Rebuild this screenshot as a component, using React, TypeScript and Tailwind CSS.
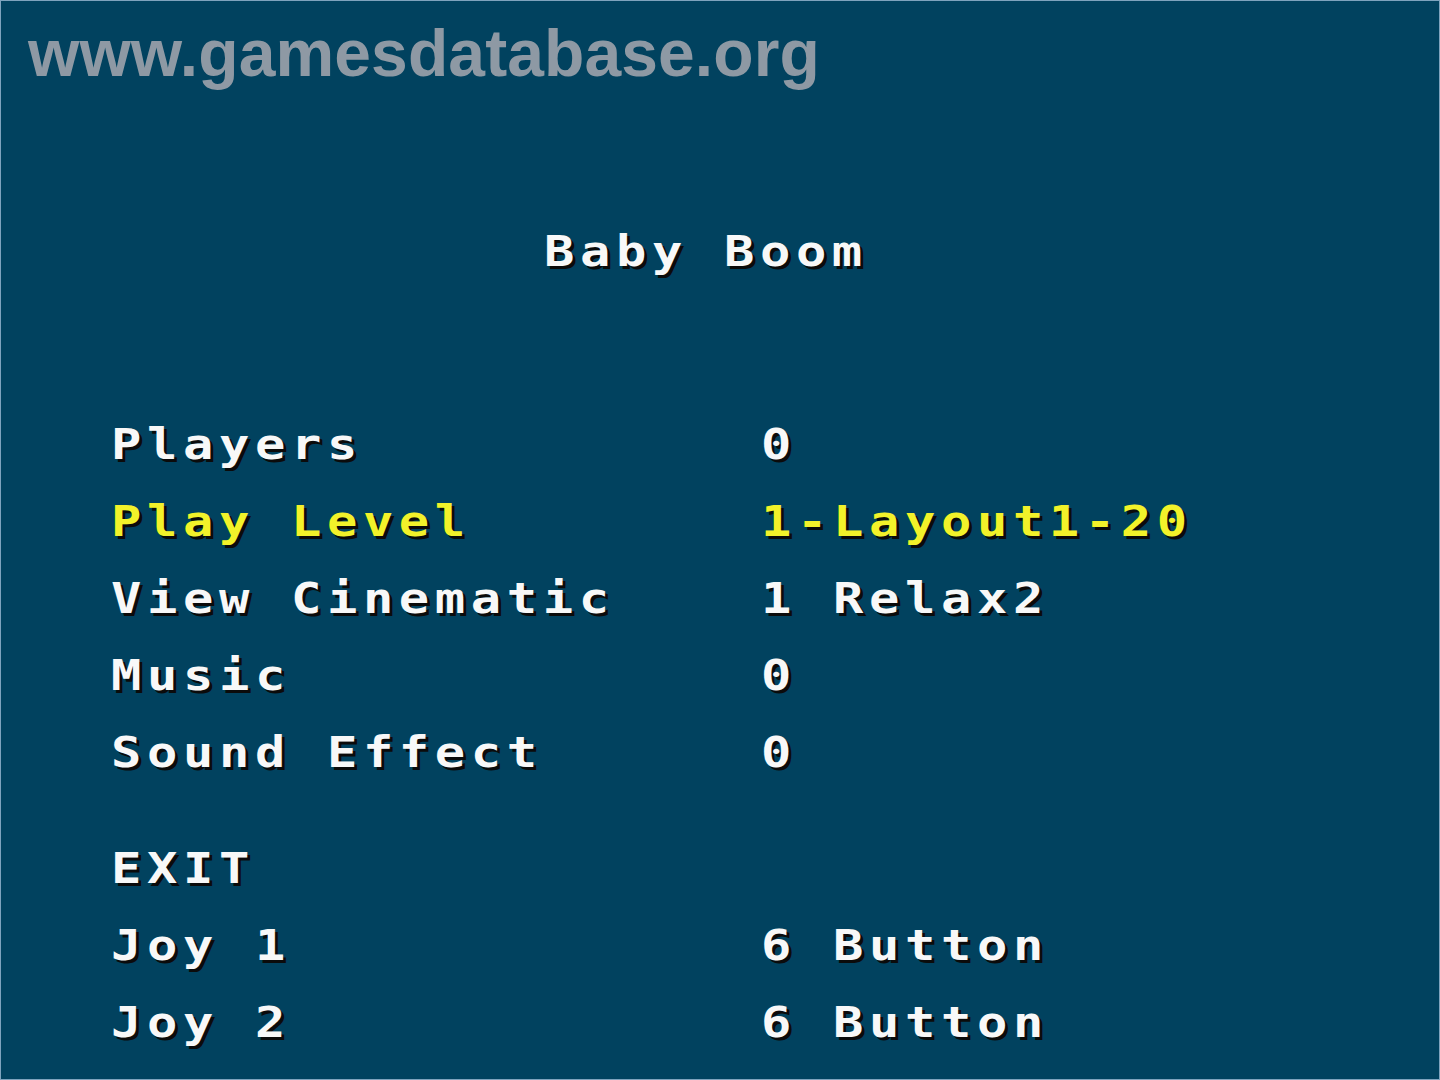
const rows = [
  { label: 'Players', value: '0' },
  { label: 'Play Level', value: '1-Layout1-20', active: true },
  { label: 'View Cinematic', value: '1 Relax2' },
  { label: 'Music', value: '0' },
  { label: 'Sound Effect', value: '0' },
]

const controls = [
  { label: 'EXIT', value: '' },
  { label: 'Joy 1', value: '6 Button' },
  { label: 'Joy 2', value: '6 Button' },
]

const pixel =
  "inline-block origin-left scale-x-[1.2] font-['DejaVu_Sans_Mono',monospace] font-bold text-[42px] tracking-[4.7px] whitespace-pre [text-shadow:2.5px_3px_0_#0b0b0b]"

const MenuRow = ({ label, value, active }: { label: string; value: string; active?: boolean }) => (
  <div className={`flex h-[77px] items-center ${active ? 'text-[#f2f22a]' : 'text-[#f8f8f8]'}`}>
    <div className="w-[650px]">
      <span className={pixel}>{label}</span>
    </div>
    <span className={pixel}>{value}</span>
  </div>
)

export default function App() {
  return (
    <div className="w-[1440px] h-[1080px] bg-[#01425f] border border-[#7fa3bd] overflow-hidden">
      <div className="pl-[27px] pt-[14px] h-[100px] font-['Liberation_Sans',Arial,sans-serif] font-bold text-[66px] leading-[76px] tracking-[0.1px] text-[#8e99a4]">
        www.gamesdatabase.org
      </div>
      <div className="pl-[543px] pt-[119px] h-[290px] text-[#f8f8f8]">
        <span className={pixel}>Baby Boom</span>
      </div>
      <div className="pl-[110px] pt-[15px]">
        {rows.map((r) => (
          <MenuRow key={r.label} {...r} />
        ))}
        <div className="h-[39px]" />
        {controls.map((r) => (
          <MenuRow key={r.label} {...r} />
        ))}
      </div>
    </div>
  )
}
